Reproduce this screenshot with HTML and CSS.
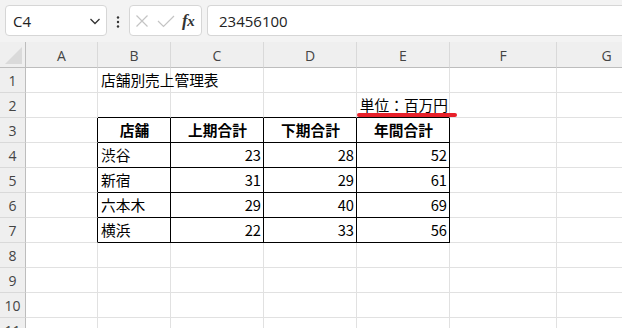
FILE: index.html
```html
<!DOCTYPE html>
<html lang="ja">
<head>
<meta charset="utf-8">
<title>Sheet</title>
<link rel="stylesheet" href="styles.css">
</head>
<body>
<div class="app">
  <div class="toolbar">
    <div class="namebox">
      <span class="ref">C4</span>
      <svg class="chev" width="12" height="8" viewBox="0 0 12 8"><path d="M1.5 2 L6 6.5 L10.5 2" fill="none" stroke="#333" stroke-width="1.3"/></svg>
    </div>
    <svg class="dots" width="4" height="12" viewBox="0 0 4 12"><circle cx="2" cy="1.5" r="1.2" fill="#333"/><circle cx="2" cy="6" r="1.2" fill="#333"/><circle cx="2" cy="10.5" r="1.2" fill="#333"/></svg>
    <div class="fxbox">
      <svg class="icon" width="14" height="14" viewBox="0 0 14 14"><path d="M1.5 1.5 L12.5 12.5 M12.5 1.5 L1.5 12.5" stroke="#c4c4c4" stroke-width="1.2" fill="none"/></svg>
      <svg class="icon" width="18" height="14" viewBox="0 0 18 14"><path d="M1 7 L6.5 12.5 L17 2" stroke="#c4c4c4" stroke-width="1.2" fill="none"/></svg>
      <span class="fx">f<i>x</i></span>
    </div>
    <div class="formula">23456100</div>
  </div>

  <div class="sheet">
    <div class="corner"><span class="tri"></span></div>
    <div class="ch">A</div><div class="ch">B</div><div class="ch">C</div><div class="ch">D</div><div class="ch">E</div><div class="ch">F</div><div class="ch last">G</div>

    <div class="rh">1</div>
    <div class="c"></div><div class="c ov">店舗別売上管理表</div><div class="c"></div><div class="c"></div><div class="c"></div><div class="c"></div><div class="c"></div>

    <div class="rh">2</div>
    <div class="c"></div><div class="c bB"></div><div class="c bB"></div><div class="c bB"></div><div class="c bB num unit"><span class="ul">単位：百万円</span></div><div class="c"></div><div class="c"></div>

    <div class="rh">3</div>
    <div class="c bR"></div><div class="c bR bB hd">店舗</div><div class="c bR bB hd">上期合計</div><div class="c bR bB hd">下期合計</div><div class="c bR bB hd">年間合計</div><div class="c"></div><div class="c"></div>

    <div class="rh">4</div>
    <div class="c bR"></div><div class="c bR bB">渋谷</div><div class="c bR bB num">23</div><div class="c bR bB num">28</div><div class="c bR bB num">52</div><div class="c"></div><div class="c"></div>

    <div class="rh">5</div>
    <div class="c bR"></div><div class="c bR bB">新宿</div><div class="c bR bB num">31</div><div class="c bR bB num">29</div><div class="c bR bB num">61</div><div class="c"></div><div class="c"></div>

    <div class="rh">6</div>
    <div class="c bR"></div><div class="c bR bB">六本木</div><div class="c bR bB num">29</div><div class="c bR bB num">40</div><div class="c bR bB num">69</div><div class="c"></div><div class="c"></div>

    <div class="rh">7</div>
    <div class="c bR"></div><div class="c bR bB">横浜</div><div class="c bR bB num">22</div><div class="c bR bB num">33</div><div class="c bR bB num">56</div><div class="c"></div><div class="c"></div>

    <div class="rh">8</div>
    <div class="c"></div><div class="c"></div><div class="c"></div><div class="c"></div><div class="c"></div><div class="c"></div><div class="c"></div>

    <div class="rh">9</div>
    <div class="c"></div><div class="c"></div><div class="c"></div><div class="c"></div><div class="c"></div><div class="c"></div><div class="c"></div>

    <div class="rh">10</div>
    <div class="c"></div><div class="c"></div><div class="c"></div><div class="c"></div><div class="c"></div><div class="c"></div><div class="c"></div>

    <div class="rh">11</div>
    <div class="c"></div><div class="c"></div><div class="c"></div><div class="c"></div><div class="c"></div><div class="c"></div><div class="c"></div>
  </div>

  <div class="redline"></div>
</div>
</body>
</html>
```

FILE: styles.css
```css
* { box-sizing: border-box; }

html, body {
  margin: 0;
  padding: 0;
}

body {
  width: 622px;
  height: 328px;
  overflow: hidden;
  background: #ffffff;
}

.app {
  position: relative;
  width: 622px;
  height: 328px;
  overflow: hidden;
  font-family: "Noto Sans CJK JP", "Noto Sans", sans-serif;
}

/* ---------- toolbar ---------- */
.toolbar {
  height: 42px;
  background: #f3f3f3;
  display: flex;
  align-items: flex-start;
  padding: 5px 0 0 5px;
}

.namebox {
  width: 102px;
  height: 31px;
  background: #fff;
  border: 1px solid #d6d6d6;
  border-radius: 4px;
  display: flex;
  align-items: center;
  justify-content: space-between;
  padding: 0 5px 0 7px;
  font-family: "Open Sans", "Noto Sans", sans-serif;
  font-size: 15px;
  color: #222;
}

.chev { margin-top: 1px; }

.dots {
  margin: 11px 9px 0 9px;
}

.fxbox {
  width: 73px;
  height: 31px;
  background: #fff;
  border: 1px solid #d6d6d6;
  border-radius: 4px;
  display: flex;
  align-items: center;
  padding: 0 0 0 5px;
  gap: 8px;
}

.fxbox .icon { flex: none; }

.fx {
  font-family: "Liberation Serif", "DejaVu Serif", serif;
  font-style: italic;
  font-weight: bold;
  font-size: 17px;
  color: #333;
  margin-left: -1px;
  letter-spacing: -0.5px;
}

.fx i { font-style: italic; font-weight: bold; font-size: 15px; }

.formula {
  flex: 1;
  margin-left: 5px;
  height: 31px;
  background: #fff;
  border: 1px solid #d6d6d6;
  border-right: none;
  border-radius: 4px 0 0 4px;
  display: flex;
  align-items: center;
  padding-left: 11px;
  font-family: "Open Sans", "Noto Sans", sans-serif;
  font-size: 15px;
  color: #222;
}

/* ---------- sheet grid ---------- */
.sheet {
  display: grid;
  grid-template-columns: 26px 72px 73px 93px 93px 93px 107px 100px;
  grid-template-rows: 26px;
  grid-auto-rows: 25px;
  background: #fff;
}

.corner {
  background: #efefef;
  border-right: 1px solid #bdbdbd;
  border-bottom: 1px solid #bdbdbd;
  position: relative;
}

.tri {
  position: absolute;
  right: 3px;
  bottom: 3px;
  width: 0;
  height: 0;
  border-left: 17px solid transparent;
  border-bottom: 17px solid #dadada;
}

.ch {
  background: #efefef;
  border-right: 1px solid #d9d9d9;
  border-bottom: 1px solid #bdbdbd;
  display: flex;
  align-items: center;
  justify-content: center;
  font-family: "Open Sans", "Noto Sans", sans-serif;
  font-size: 14px;
  color: #444;
  padding-top: 1px;
}

.rh {
  background: #efefef;
  border-right: 1px solid #bdbdbd;
  border-bottom: 1px solid #d9d9d9;
  display: flex;
  align-items: center;
  justify-content: center;
  font-family: "Open Sans", "Noto Sans", sans-serif;
  font-size: 14px;
  color: #444;
}

.c {
  border-right: 1px solid #e1e1e1;
  border-bottom: 1px solid #e1e1e1;
  display: flex;
  align-items: center;
  padding: 0 2px 0 3px;
  font-size: 14.7px;
  color: #000;
  white-space: nowrap;
  line-height: 1;
}

.ov { overflow: visible; position: relative; z-index: 1; }

.num { justify-content: flex-end; }

.hd {
  justify-content: center;
  font-weight: bold;
}

.bR { border-right-color: #000; }
.bB { border-bottom-color: #000; }

.unit { padding-right: 1px; }

.ul {
  text-decoration: underline;
  text-decoration-thickness: 1px;
  text-underline-offset: 3px;
}

/* annotation shape drawn over the sheet */
.redline {
  position: absolute;
  left: 357px;
  top: 113px;
  width: 100px;
  height: 4px;
  border-radius: 2px;
  background: #e8202a;
}
```
